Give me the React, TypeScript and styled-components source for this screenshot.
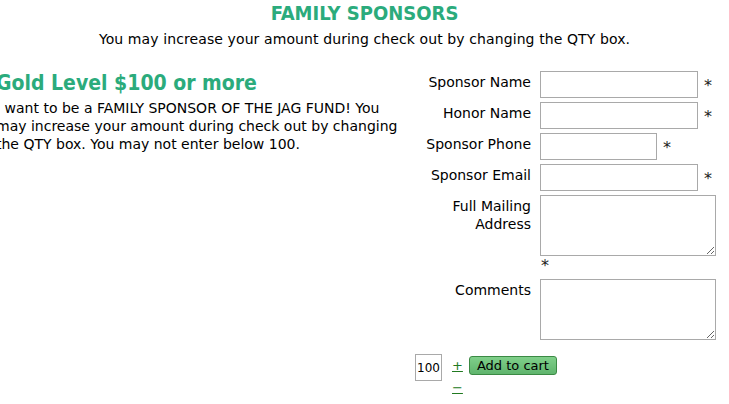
import React from 'react';
import styled, { createGlobalStyle } from 'styled-components';

const GlobalStyle = createGlobalStyle`
  html, body {
    margin: 0;
    padding: 0;
    background: #fff;
    overflow: hidden;
  }
  body {
    font-family: Verdana, "DejaVu Sans", sans-serif;
    color: #000;
  }
`;

const Page = styled.div`
  width: 729px;
  height: 404px;
  overflow: hidden;
`;

const Header = styled.header`
  text-align: center;
  padding-top: 1px;
`;

const Title = styled.h1`
  margin: 0;
  font-family: "DejaVu Sans Condensed", "DejaVu Sans", sans-serif;
  font-size: 20px;
  font-weight: bold;
  color: #2bab7c;
  line-height: 24px;
`;

const Subtitle = styled.p`
  margin: 5px 0 0;
  font-family: "DejaVu Sans", sans-serif;
  font-size: 14px;
  letter-spacing: 0.1px;
  line-height: 18px;
`;

const Columns = styled.div`
  display: grid;
  grid-template-columns: 419px 1fr;
  margin-left: -4px;
  margin-top: 22px;
`;

const Intro = styled.section`
  padding-right: 14px;
`;

const Level = styled.h2`
  margin: 0 0 3px;
  font-family: "DejaVu Sans Condensed", "DejaVu Sans", sans-serif;
  font-size: 21px;
  font-weight: bold;
  color: #2bab7c;
  line-height: 26px;
`;

const Blurb = styled.p`
  margin: 0;
  font-size: 14px;
  line-height: 18px;
`;

const FormPanel = styled.div`
  padding-top: 1px;
`;

const Form = styled.form`
  display: grid;
  grid-template-columns: 116px auto;
  column-gap: 9px;
  row-gap: 4px;
  align-items: start;
`;

const Label = styled.label`
  text-align: right;
  font-size: 14px;
  line-height: 18px;
  padding-top: 2px;
`;

const Field = styled.div<{ $stack?: boolean }>`
  display: flex;
  flex-direction: ${p => (p.$stack ? 'column' : 'row')};
  align-items: ${p => (p.$stack ? 'flex-start' : 'center')};
  gap: ${p => (p.$stack ? '0' : '6px')};
`;

const TextInput = styled.input<{ $w: number }>`
  box-sizing: border-box;
  width: ${p => p.$w}px;
  height: 27px;
  border: 1px solid #a9a9a9;
  margin: 0;
  padding: 2px 4px;
  font-size: 13px;
`;

const Area = styled.textarea`
  box-sizing: border-box;
  width: 176px;
  height: 61px;
  border: 1px solid #a9a9a9;
  margin: 0;
  padding: 2px;
  font-size: 13px;
  resize: both;
`;

const Req = styled.span<{ $below?: boolean }>`
  font-family: "DejaVu Sans", sans-serif;
  font-size: 16px;
  line-height: 18px;
  color: #222;
  margin-top: ${p => (p.$below ? '1px' : '3px')};
  padding-left: ${p => (p.$below ? '1px' : '0')};
`;

const Buy = styled.div`
  display: flex;
  align-items: flex-start;
  margin-top: 14px;
`;

const Qty = styled.input`
  box-sizing: border-box;
  width: 27px;
  height: 27px;
  border: 1px solid #a9a9a9;
  padding: 0 0 0 1px;
  margin: 0 10px 0 0;
  font-size: 12px;
  font-family: "DejaVu Sans", sans-serif;
  color: #000;
`;

const Steppers = styled.div`
  display: flex;
  flex-direction: column;
  gap: 2px;
  padding-top: 2px;
  margin-right: 6px;
`;

const Step = styled.a`
  color: #217a21;
  font-size: 13px;
  line-height: 20px;
  text-decoration: underline;
`;

const CartButton = styled.button`
  margin-top: 2px;
  height: 19px;
  padding: 0 7px;
  border: 1px solid #3b8a44;
  border-radius: 3px;
  background: linear-gradient(#80cf8a, #5fb56d);
  font-family: "DejaVu Sans", sans-serif;
  font-size: 13px;
  line-height: 17px;
  color: #000;
  cursor: pointer;
`;

const fields = [
  { label: 'Sponsor Name', w: 158 },
  { label: 'Honor Name', w: 158 },
  { label: 'Sponsor Phone', w: 117 },
  { label: 'Sponsor Email', w: 158 },
];

export default function App() {
  return (
    <Page>
      <GlobalStyle />
      <Header>
        <Title>FAMILY SPONSORS</Title>
        <Subtitle>You may increase your amount during check out by changing the QTY box.</Subtitle>
      </Header>
      <Columns>
        <Intro>
          <Level>Gold Level $100 or more</Level>
          <Blurb>
            I want to be a FAMILY SPONSOR OF THE JAG FUND! You may increase your amount during check out by
            changing the QTY box. You may not enter below 100.
          </Blurb>
        </Intro>
        <FormPanel>
          <Form>
            {fields.map(f => (
              <React.Fragment key={f.label}>
                <Label>{f.label}</Label>
                <Field>
                  <TextInput $w={f.w} />
                  <Req>*</Req>
                </Field>
              </React.Fragment>
            ))}
            <Label>
              Full Mailing
              <br />
              Address
            </Label>
            <Field $stack>
              <Area />
              <Req $below>*</Req>
            </Field>
            <Label>Comments</Label>
            <Field>
              <Area />
            </Field>
          </Form>
          <Buy>
            <Qty defaultValue="100" />
            <Steppers>
              <Step href="#">+</Step>
              <Step href="#">−</Step>
            </Steppers>
            <CartButton type="button">Add to cart</CartButton>
          </Buy>
        </FormPanel>
      </Columns>
    </Page>
  );
}
